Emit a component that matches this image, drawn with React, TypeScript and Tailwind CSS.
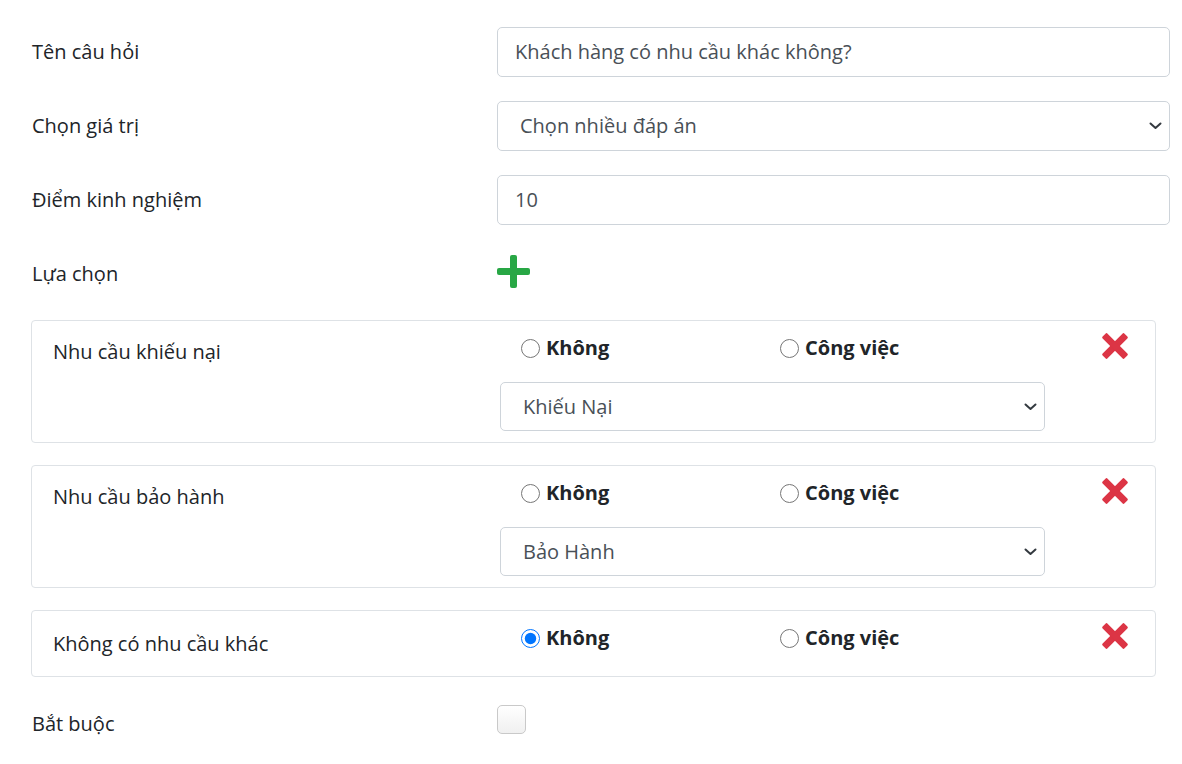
import React from 'react';

const PlusIcon = () => (
  <svg width="33" height="33" viewBox="0 0 33 33" className="block">
    <rect x="13" y="0" width="7" height="33" rx="2" fill="#28a745" />
    <rect x="0" y="13" width="33" height="7" rx="2" fill="#28a745" />
  </svg>
);

const TimesIcon = () => (
  <svg width="28" height="28" viewBox="0 0 28 28" className="block">
    <rect x="10.5" y="-1.5" width="7" height="31" rx="1.5" fill="#dc3545" transform="rotate(45 14 14)" />
    <rect x="10.5" y="-1.5" width="7" height="31" rx="1.5" fill="#dc3545" transform="rotate(-45 14 14)" />
  </svg>
);

const Chevron = () => (
  <svg width="13" height="8" viewBox="0 0 13 8" className="block">
    <path d="M1.5 1.5 L6.5 6 L11.5 1.5" fill="none" stroke="#343a40" strokeWidth="2" strokeLinecap="round" strokeLinejoin="round" />
  </svg>
);

const TextBox = ({ value }: { value: string }) => (
  <div className="h-[50px] w-full flex items-center border border-[#ced4da] rounded-[5px] pl-[17px] text-[#495057]">
    {value}
  </div>
);

const SelectBox = ({ value, className }: { value: string; className?: string }) => (
  <div
    className={`flex items-center justify-between border border-[#ced4da] rounded-[5px] pl-[22px] pr-[7px] text-[#495057] ${className ?? 'w-full h-[50px]'}`}
  >
    <span>{value}</span>
    <Chevron />
  </div>
);

const Row = ({ label, children }: { label: string; children: React.ReactNode }) => (
  <div className="flex items-center h-[50px] mb-[24px]">
    <div className="w-[465px] shrink-0">{label}</div>
    <div className="flex-1">{children}</div>
  </div>
);

const Radio = ({ label, checked }: { label: string; checked?: boolean }) => (
  <label className="flex items-center gap-[6px] font-bold">
    <input type="radio" readOnly checked={!!checked} className="w-[19px] h-[19px] m-0 accent-[#0075ff]" />
    <span>{label}</span>
  </label>
);

interface OptionProps {
  name: string;
  selected?: string;
  picked?: boolean;
}

const OptionCard = ({ name, selected, picked }: OptionProps) => (
  <div className={`flex border border-[#dee2e6] rounded-[4px] -ml-px mr-[14px] pl-[21px] pt-[15px] mb-[22px] ${selected ? 'pb-[11px]' : 'pb-[26px]'}`}>
    <div className={`w-[447px] shrink-0 ${selected ? 'leading-[28px] pt-[2px]' : 'leading-[24px] mt-[6px] -mb-[6px]'}`}>{name}</div>
    <div className="w-[545px] shrink-0">
      <div className="flex items-center h-[24px] pl-[21px]">
        <div className="w-[259px]">
          <Radio label="Không" checked={picked} />
        </div>
        <Radio label="Công việc" />
      </div>
      {selected && <SelectBox value={selected} className="w-[545px] mt-[22px] h-[49px]" />}
    </div>
    <div className="ml-[56px] -mt-[4px] h-[24px]">
      <TimesIcon />
    </div>
  </div>
);

export default function App() {
  return (
    <div className="min-h-screen bg-white font-['Open_Sans',sans-serif] text-[20px] text-[#212529] pl-[32px] pr-[12px] pt-[27px]">
      <Row label="Tên câu hỏi">
        <TextBox value="Khách hàng có nhu cầu khác không?" />
      </Row>
      <Row label="Chọn giá trị">
        <SelectBox value="Chọn nhiều đáp án" />
      </Row>
      <Row label="Điểm kinh nghiệm">
        <TextBox value="10" />
      </Row>
      <div className="flex h-[50px] mb-[21px]">
        <div className="w-[465px] shrink-0 self-center">Lựa chọn</div>
        <div className="pt-[6px]">
          <PlusIcon />
        </div>
      </div>

      <OptionCard name="Nhu cầu khiếu nại" selected="Khiếu Nại" />
      <OptionCard name="Nhu cầu bảo hành" selected="Bảo Hành" />
      <OptionCard name="Không có nhu cầu khác" picked />

      <div className="flex h-[50px] mt-[22px]">
        <div className="w-[465px] shrink-0 self-center">Bắt buộc</div>
        <div className="pt-[6px]">
          <div className="w-[29px] h-[29px] rounded-[5px] border border-[#c9c9c9] bg-gradient-to-b from-white to-[#f0f0f0]" />
        </div>
      </div>
    </div>
  );
}
